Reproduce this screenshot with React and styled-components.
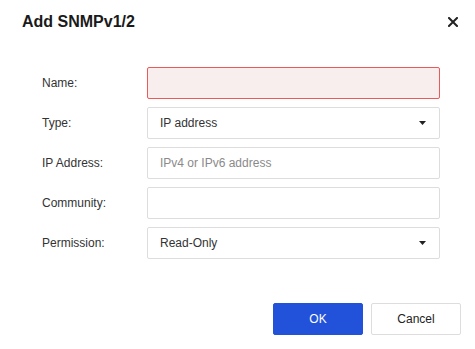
import React from "react";
import styled, { createGlobalStyle } from "styled-components";

const GlobalStyle = createGlobalStyle`
    html, body {
        margin: 0;
        padding: 0;
        background: #ffffff;
    }
    body {
        font-family: "Liberation Sans", Arial, sans-serif;
    }
    * {
        box-sizing: border-box;
    }
`;

const Dialog = styled.div`
    width: 475px;
    height: 349px;
    background: #ffffff;
    display: flex;
    flex-direction: column;
`;

const Header = styled.div`
    display: flex;
    justify-content: space-between;
    align-items: center;
    padding: 12px 17px 0 22px;
    h2 {
        margin: 0;
        font-size: 16px;
        line-height: 20px;
        font-weight: bold;
        color: #1a1a1a;
    }
`;

const CloseButton = styled.button`
    width: 10px;
    height: 10px;
    padding: 0;
    border: none;
    background: transparent;
    cursor: pointer;
    display: flex;
    svg {
        display: block;
    }
`;

const Form = styled.div`
    display: grid;
    grid-template-columns: 105px 1fr;
    grid-auto-rows: 32px;
    row-gap: 8px;
    padding: 35px 35px 0 42px;
`;

const Label = styled.label`
    display: flex;
    align-items: center;
    font-size: 12px;
    color: #333333;
`;

const TextField = styled.input`
    width: 100%;
    height: 32px;
    margin: 0;
    padding: 0 12px;
    font-family: inherit;
    font-size: 12px;
    color: #333333;
    border: 1px solid ${(p) => (p.$error ? "#e95a5a" : "#dddddd")};
    background: ${(p) => (p.$error ? "#f9eeee" : "#ffffff")};
    border-radius: 2px;
    outline: none;
    &::placeholder {
        color: #8a8a8a;
    }
`;

const Select = styled.div`
    display: flex;
    align-items: center;
    justify-content: space-between;
    height: 32px;
    padding: 0 13px 0 12px;
    font-size: 12px;
    color: #333333;
    border: 1px solid #dddddd;
    border-radius: 2px;
    cursor: pointer;
`;

const Footer = styled.div`
    display: flex;
    justify-content: flex-end;
    gap: 8px;
    padding: 44px 14px 0 0;
`;

const Button = styled.button`
    width: 90px;
    height: 32px;
    font-family: inherit;
    font-size: 12px;
    border-radius: 2px;
    cursor: pointer;
    border: 1px solid ${(p) => (p.$primary ? "#2152d9" : "#dddddd")};
    background: ${(p) => (p.$primary ? "#2152d9" : "#ffffff")};
    color: ${(p) => (p.$primary ? "#ffffff" : "#222222")};
`;

const Caret = () => (
    <svg width="7" height="4" viewBox="0 0 7 4">
        <path d="M0 0 L7 0 L3.5 4 Z" fill="#222" />
    </svg>
);

const App = () => {
    return (
        <>
            <GlobalStyle />
            <Dialog>
                <Header>
                    <h2>Add SNMPv1/2</h2>
                    <CloseButton aria-label="Close">
                        <svg width="10" height="10" viewBox="0 0 10 10">
                            <path d="M1 1 L9 9 M9 1 L1 9" stroke="#222" strokeWidth="2" strokeLinecap="square" />
                        </svg>
                    </CloseButton>
                </Header>
                <Form>
                    <Label>Name:</Label>
                    <TextField $error />
                    <Label>Type:</Label>
                    <Select>
                        <span>IP address</span>
                        <Caret />
                    </Select>
                    <Label>IP Address:</Label>
                    <TextField placeholder="IPv4 or IPv6 address" />
                    <Label>Community:</Label>
                    <TextField />
                    <Label>Permission:</Label>
                    <Select>
                        <span>Read-Only</span>
                        <Caret />
                    </Select>
                </Form>
                <Footer>
                    <Button $primary>OK</Button>
                    <Button>Cancel</Button>
                </Footer>
            </Dialog>
        </>
    );
};

export default App;
